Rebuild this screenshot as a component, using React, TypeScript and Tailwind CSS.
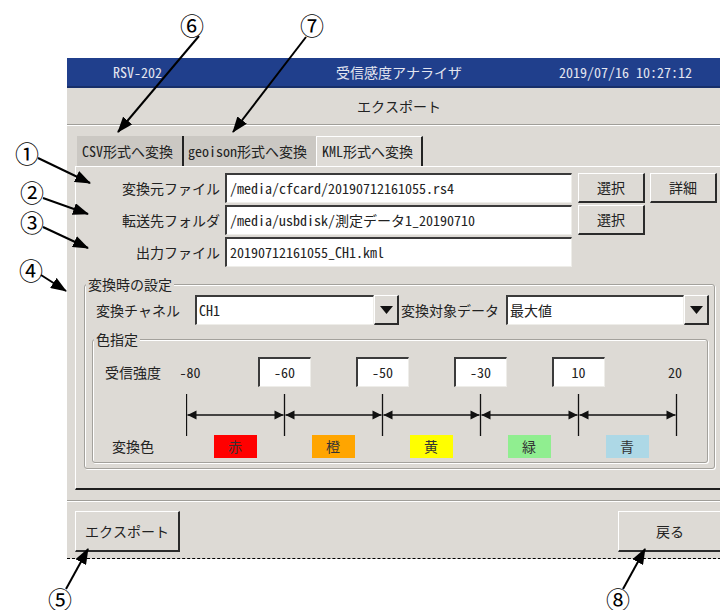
import type { ReactNode } from 'react'

const sunken =
  'bg-white border-t-2 border-l-2 border-r border-b border-t-[#3b3b3b] border-l-[#3b3b3b] border-r-[#eeede9] border-b-[#eeede9]'
const raised =
  'bg-[#dddad5] border-t border-l border-r-2 border-b-2 border-t-white border-l-white border-r-[#2b2b2b] border-b-[#2b2b2b]'

const fileRows = [
  { label: '変換元ファイル', value: '/media/cfcard/20190712161055.rs4', buttons: ['選択', '詳細'] },
  { label: '転送先フォルダ', value: '/media/usbdisk/測定データ1_20190710', buttons: ['選択'] },
  { label: '出力ファイル', value: '20190712161055_CH1.kml', buttons: [] as string[] },
]

const thresholds = ['-60', '-50', '-30', '10']

const swatches = [
  { name: '赤', bg: 'bg-[#ff0000]' },
  { name: '橙', bg: 'bg-[#ffa500]' },
  { name: '黄', bg: 'bg-[#ffff00]' },
  { name: '緑', bg: 'bg-[#90ee90]' },
  { name: '青', bg: 'bg-[#add8e6]' },
]

const callouts = [
  { n: '①', x: 27, y: 153, from: [38, 158], to: [90, 183] },
  { n: '②', x: 32, y: 192, from: [43, 198], to: [88, 214] },
  { n: '③', x: 32, y: 222, from: [43, 227], to: [88, 248] },
  { n: '④', x: 31, y: 270, from: [41, 275], to: [66, 291] },
  { n: '⑤', x: 60, y: 599, from: [66, 589], to: [88, 549] },
  { n: '⑥', x: 192, y: 25, from: [199, 36], to: [118, 132] },
  { n: '⑦', x: 312, y: 25, from: [306, 37], to: [233, 132] },
  { n: '⑧', x: 618, y: 599, from: [623, 589], to: [645, 549] },
]

function DropButton() {
  return (
    <div className={`${raised} w-[25px] h-full flex items-center justify-center`}>
      <svg width="13" height="8" viewBox="0 0 13 8">
        <polygon points="0,0 13,0 6.5,8" fill="#111" />
      </svg>
    </div>
  )
}

function Group({ title, className, children }: { title: string; className: string; children: ReactNode }) {
  return (
    <fieldset
      className={`${className} min-w-0 rounded-[3px] border border-[#a3a19c] shadow-[inset_1px_1px_0_#fff,1px_1px_0_#fff]`}
    >
      <legend className="ml-[1px] px-[2px] bg-[#dddad5] text-[14px] leading-[16px]">{title}</legend>
      {children}
    </fieldset>
  )
}

function Ticks() {
  const xs = [0, 98, 196, 294, 392, 490].map((v) => v + 0.5)
  return (
    <svg width="500" height="42" className="block mt-[7px]">
      {xs.map((x) => (
        <line key={x} x1={x} y1={0} x2={x} y2={42} stroke="#111" strokeWidth="1.3" />
      ))}
      {xs.slice(0, 5).map((x) => (
        <g key={`s${x}`} fill="#111">
          <line x1={x + 1} y1={21} x2={x + 97} y2={21} stroke="#111" strokeWidth="1.3" />
          <polygon points={`${x + 1},21 ${x + 10},16.5 ${x + 10},25.5`} />
          <polygon points={`${x + 97},21 ${x + 88},16.5 ${x + 88},25.5`} />
        </g>
      ))}
    </svg>
  )
}

export default function App() {
  return (
    <div className="relative w-[720px] h-[610px] overflow-hidden bg-white pt-[58px] pl-[67px] text-[14px] text-[#222] font-['Noto_Sans_Mono_CJK_JP','Noto_Sans_CJK_JP',monospace]">
      <div className="w-[664px] h-[501px] bg-[#dddad5] border-b border-dashed border-black">
        {/* title bar */}
        <div className="h-[30px] grid grid-cols-[1fr_auto_1fr] items-center bg-[#203f8c] border-b-2 border-[#172f6a] text-[#e4e6f0]">
          <span className="pl-[46px]">RSV-202</span>
          <span>受信感度アナライザ</span>
          <span className="text-right pr-[39px]">2019/07/16 10:27:12</span>
        </div>

        <div className="h-[37px] flex items-center justify-center border-b border-[#a09e99]">エクスポート</div>
        <div className="h-px bg-white" />

        {/* tabs */}
        <div className="flex pl-[10px] mt-[10px] h-[30px]">
          <div className="w-[107px] flex items-center pl-[5px] bg-[#cbc8c3] border-r-2 border-[#222]">
            CSV形式へ変換
          </div>
          <div className="w-[132px] flex items-center pl-[4px] bg-[#cbc8c3]">geoison形式へ変換</div>
          <div className="w-[107px] flex items-center pl-[5px] bg-[#dfdcd7] border-t border-l border-white border-r-2 border-r-[#222]">
            KML形式へ変換
          </div>
        </div>

        {/* tab panel */}
        <div className="ml-[8px] h-[324px] border-t border-l border-white border-b-2 border-b-[#1e1e1e] pt-[6px]">
          <div className="flex flex-col gap-[2px]">
            {fileRows.map((row) => (
              <div key={row.label} className="flex h-[30px]">
                <div className="w-[149px] pr-[5px] flex items-center justify-end">{row.label}</div>
                <div className={`${sunken} w-[347px] flex items-center pl-[3px] whitespace-nowrap`}>{row.value}</div>
                {row.buttons.map((b, i) => (
                  <div
                    key={b}
                    className={`${raised} w-[67px] flex items-center justify-center ${i === 0 ? 'ml-[6px]' : 'ml-[5px]'}`}
                  >
                    {b}
                  </div>
                ))}
              </div>
            ))}
          </div>

          <Group title="変換時の設定" className="ml-[8px] mt-[9px] w-[631px] pb-[5px]">
            <div className="flex h-[30px] mt-[3px]">
              <div className="w-[110px] pl-[11px] flex items-center">変換チャネル</div>
              <div className={`${sunken} w-[179px] flex items-center pl-[2px]`}>CH1</div>
              <DropButton />
              <div className="w-[107px] pl-[2px] flex items-center">変換対象データ</div>
              <div className={`${sunken} w-[178px] flex items-center pl-[2px]`}>最大値</div>
              <DropButton />
            </div>

            <Group title="色指定" className="ml-[7px] mt-[6px] w-[616px] pb-[4px]">
              <div className="grid grid-cols-[44px_repeat(5,98px)_1fr] h-[30px] items-center justify-items-center mt-[10px]">
                <span className="justify-self-start pl-[12px] whitespace-nowrap">受信強度</span>
                <span className="pl-[8px]">-80</span>
                {thresholds.map((t) => (
                  <div key={t} className={`${sunken} w-[53px] h-[30px] flex items-center justify-center`}>
                    {t}
                  </div>
                ))}
                <span className="justify-self-start pl-[41px]">20</span>
              </div>

              <div className="pl-[93px]">
                <Ticks />
              </div>

              <div className="grid grid-cols-[93px_repeat(5,98px)] h-[23px] items-center justify-items-center mt-[-1px]">
                <span className="justify-self-start pl-[19px]">変換色</span>
                {swatches.map((s) => (
                  <div key={s.name} className={`${s.bg} w-[43px] h-[23px] flex items-center justify-center text-[#333]`}>
                    {s.name}
                  </div>
                ))}
              </div>
            </Group>
          </Group>
        </div>

        <div className="mt-[10px] border-t border-[#a09e99]" />
        <div className="h-px bg-white" />

        <div className="flex justify-between px-[8px] mt-[9px]">
          <div className={`${raised} w-[105px] h-[41px] flex items-center justify-center`}>エクスポート</div>
          <div className={`${raised} w-[105px] h-[41px] flex items-center justify-center`}>戻る</div>
        </div>
      </div>

      {/* callouts */}
      <svg className="absolute inset-0" width="720" height="610">
        <defs>
          <marker id="head" markerUnits="userSpaceOnUse" markerWidth="16" markerHeight="12" refX="15" refY="6" orient="auto">
            <polygon points="0,0 16,6 0,12" fill="#000" />
          </marker>
        </defs>
        {callouts.map((c) => (
          <line
            key={c.n}
            x1={c.from[0]}
            y1={c.from[1]}
            x2={c.to[0]}
            y2={c.to[1]}
            stroke="#000"
            strokeWidth="2"
            markerEnd="url(#head)"
          />
        ))}
      </svg>
      {callouts.map((c) => (
        <span
          key={c.n}
          className="absolute w-[26px] h-[24px] -ml-[13px] -mt-[12px] flex items-center justify-center text-[24px] leading-[24px] text-black font-['Noto_Sans_CJK_JP',sans-serif]"
          style={{ left: c.x, top: c.y }}
        >
          {c.n}
        </span>
      ))}
    </div>
  )
}
